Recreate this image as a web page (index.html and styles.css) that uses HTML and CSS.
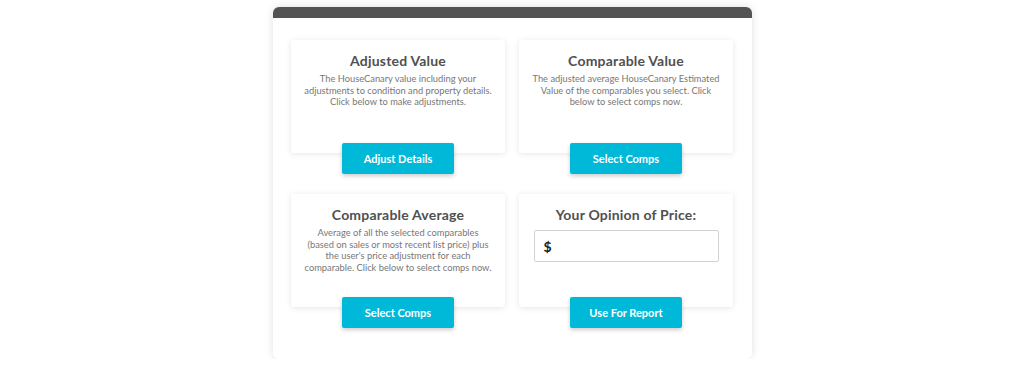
FILE: index.html
```html
<!DOCTYPE html>
<html lang="en">

<head>
  <meta charset="UTF-8">
  <meta name="viewport" content="width=device-width, initial-scale=1.0">
  <title>Valuation Options</title>
  <link rel="stylesheet" href="styles.css">
</head>

<body>
  <main class="panel">
    <div class="panel-bar"></div>
    <div class="grid">
      <div class="cell">
        <div class="card">
          <h2>Adjusted Value</h2>
          <p>
            The HouseCanary value including your<br>
            adjustments to condition and property details.<br>
            Click below to make adjustments.
          </p>
        </div>
        <button class="button">Adjust Details</button>
      </div>
      <div class="cell">
        <div class="card">
          <h2>Comparable Value</h2>
          <p>
            The adjusted average HouseCanary Estimated<br>
            Value of the comparables you select. Click<br>
            below to select comps now.
          </p>
        </div>
        <button class="button">Select Comps</button>
      </div>
      <div class="cell">
        <div class="card">
          <h2>Comparable Average</h2>
          <p>
            Average of all the selected comparables<br>
            (based on sales or most recent list price) plus<br>
            the user's price adjustment for each<br>
            comparable. Click below to select comps now.
          </p>
        </div>
        <button class="button">Select Comps</button>
      </div>
      <div class="cell">
        <div class="card">
          <h2>Your Opinion of Price:</h2>
          <label class="price-input">
            <span>$</span>
            <input type="text">
          </label>
        </div>
        <button class="button">Use For Report</button>
      </div>
    </div>
  </main>
</body>

</html>
```

FILE: styles.css
```css
body {
  margin: 0;
  font-family: Lato, "Open Sans", sans-serif;
  background-color: white;
}

.panel {
  width: 479px;
  margin: 7px 0 0 273px;
  background: white;
  border-radius: 6px;
  box-shadow: 0 0 8px rgba(0, 0, 0, 0.12);
  overflow: hidden;
}

.panel-bar {
  height: 11px;
  background: #545454;
}

.grid {
  display: grid;
  grid-template-columns: 214px 214px;
  column-gap: 14px;
  row-gap: 20px;
  padding: 22px 19px 31px 18px;
}

.cell {
  display: flex;
  flex-direction: column;
  align-items: center;
}

.card {
  box-sizing: border-box;
  width: 100%;
  height: 113px;
  padding-top: 12px;
  background: white;
  border-radius: 3px;
  box-shadow: 0 1px 6px rgba(0, 0, 0, 0.1);
  text-align: center;
}

.card h2 {
  margin: 0;
  font-size: 14px;
  font-weight: 700;
  letter-spacing: 0.2px;
  color: #505050;
  line-height: 18px;
}

.card p {
  margin: 3px 0 0;
  font-size: 9.3px;
  line-height: 11.5px;
  color: #777;
}

.price-input {
  display: flex;
  align-items: center;
  box-sizing: border-box;
  width: 185px;
  height: 32px;
  margin: 6px auto 0;
  padding: 0 9px;
  border: 1px solid #d2d2d2;
  border-radius: 2px;
}

.price-input span {
  font-size: 14px;
  font-weight: 700;
  color: #222;
}

.price-input input {
  flex: 1;
  min-width: 0;
  border: none;
  outline: none;
  font: inherit;
}

.button {
  width: 112px;
  height: 31px;
  margin-top: -10px;
  color: white;
  background: #00b9d9;
  border: none;
  border-radius: 2px;
  box-shadow: 0 2px 4px rgba(0, 0, 0, 0.2);
  font-family: inherit;
  font-size: 11px;
  font-weight: 700;
  cursor: pointer;
}
```
